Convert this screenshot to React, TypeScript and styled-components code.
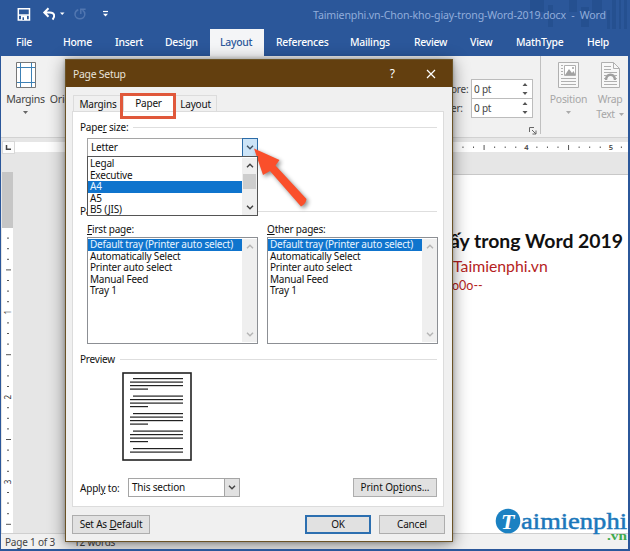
import React from "react";
import styled, { createGlobalStyle } from "styled-components";

const GlobalStyle = createGlobalStyle`
  *, *::before, *::after { box-sizing: border-box; }
  html, body { margin: 0; padding: 0; }
  body { overflow: hidden; font-family: "Noto Sans", "Open Sans", sans-serif; font-size: 10px; }
  u { text-underline-offset: 1px; text-decoration-thickness: 1px; }
`;

const Label = styled.span<{ $size?: number; $spacing?: number; $weight?: number }>`
  display: inline-block;
  white-space: pre;
  font-size: ${(p) => p.$size ?? 10}px;
  font-weight: ${(p) => p.$weight ?? 400};
  letter-spacing: ${(p) => p.$spacing ?? -0.2}px;
`;

/* ---------- Word window ---------- */
const Window = styled.div`
  position: relative;
  width: 630px;
  height: 551px;
  overflow: hidden;
  display: flex;
  flex-direction: column;
  background: #e6e6e6;
  border: solid #2b579a;
  border-width: 0 2px 2px 1px;
`;
const TitleBar = styled.header`
  position: relative;
  height: 29px;
  flex: none;
  display: flex;
  align-items: center;
  background: #2b579a;
  color: #91addb;
`;
const QuickAccess = styled.div`
  width: 312px;
  height: 29px;
  flex: none;
  svg { display: block; }
`;
const TitlePattern = styled.svg`
  position: absolute;
  right: 0;
  top: 0;
`;
const DocumentName = styled.div`
  position: relative;
  line-height: 28px;
`;
const RibbonTabs = styled.nav`
  height: 27px;
  flex: none;
  display: grid;
  grid-template-columns: 47px 52px 50px 55px 56px 74px 64px 56px 46px 71px 30px;
  padding-left: 15px;
  background: #2b579a;
`;
const RibbonTab = styled.div<{ $active?: boolean }>`
  line-height: 27px;
  white-space: nowrap;
  ${(p) =>
    p.$active
      ? "margin-left: -10px; padding-left: 10px; width: 54px; background: #f4f5f7; color: #2b579a;"
      : "color: #fff;"}
`;
const Ribbon = styled.section`
  height: 82px;
  flex: none;
  display: flex;
  background: #f1f1f1;
  border-bottom: 1px solid #d2d2d2;
  color: #444;
`;
const RibbonButton = styled.div<{ $width: number; $muted?: boolean }>`
  width: ${(p) => p.$width}px;
  flex: none;
  padding-top: 6px;
  display: flex;
  flex-direction: column;
  align-items: center;
  color: ${(p) => (p.$muted ? "#a6a6a6" : "#444")};
  svg { display: block; flex: none; }
`;
const ButtonText = styled.div`
  display: flex;
  align-items: center;
  gap: 4px;
  height: 14px;
  line-height: 14px;
  margin-top: 1px;
`;
const ButtonIcon = styled.div`
  height: 29px;
`;
const CaretLine = styled.div`
  height: 10px;
  padding-top: 5px;
`;
const Push = styled.div`
  flex: 1;
`;
const SpacingGroup = styled.div`
  width: 90px;
  flex: none;
  padding-top: 23px;
  border-right: 1px solid #c0c0c0;
  margin-bottom: 3px;
`;
const SpacingRow = styled.div`
  display: grid;
  grid-template-columns: 20px 62px;
  height: 20px;
  align-items: center;
  & + & { margin-top: -1px; }
`;
const Spinner = styled.div`
  height: 20px;
  display: flex;
  justify-content: space-between;
  align-items: center;
  padding: 0 4px 0 2px;
  background: #fff;
  border: 1px solid #bcbcbc;
  line-height: 18px;
`;
const Launcher = styled.svg`
  display: block;
  margin: 9px 0 0 78px;
`;

const Workspace = styled.main`
  flex: 1;
  display: flex;
  min-height: 0;
`;
const VerticalRuler = styled.aside`
  width: 14px;
  flex: none;
  display: flex;
  flex-direction: column;
  padding-top: 3px;
`;
const TabSelector = styled.div`
  width: 13px;
  height: 13px;
  margin-left: 1px;
  background: #fdfdfd;
  border: 1px solid #d8d8d8;
  svg { display: block; }
`;
const RulerScale = styled.svg`
  display: block;
  margin: 18px 0 0 1px;
`;
const DocumentArea = styled.div`
  flex: 1;
  display: flex;
  flex-direction: column;
`;
const HorizontalRuler = styled.svg`
  display: block;
  flex: none;
  margin-top: 4px;
`;
const Page = styled.article`
  margin: 22px 0 0 51px;
  flex: 1;
  background: #fff;
  border-top: 1px solid #c8c8c8;
  padding: 54px 0 0 384px;
  font-family: Lato, sans-serif;
  white-space: nowrap;
`;
const Heading = styled.h1`
  margin: 0;
  font-size: 19.4px;
  line-height: 24px;
  font-weight: 700;
  color: #111;
`;
const RedLine = styled.p<{ $size: number; $height: number; $indent: number }>`
  margin: 0;
  padding-left: ${(p) => p.$indent}px;
  font-size: ${(p) => p.$size}px;
  line-height: ${(p) => p.$height}px;
  color: #b51e22;
`;
const StatusBar = styled.footer`
  height: 16px;
  flex: none;
  display: flex;
  gap: 19px;
  padding-left: 4px;
  line-height: 17px;
  background: #f1f1f1;
  border-top: 1px solid #cfcfcf;
  color: #444;
`;
const Watermark = styled.svg`
  position: absolute;
  left: 494px;
  top: 505px;
`;

/* ---------- Page Setup dialog ---------- */
const Dialog = styled.div`
  position: absolute;
  left: 64px;
  top: 59px;
  width: 388px;
  height: 483px;
  display: flex;
  flex-direction: column;
  background: #f0f0f0;
  border: 1px solid #6b5326;
  box-shadow: 0 3px 16px rgba(0, 0, 0, 0.45), 0 0 4px rgba(0, 0, 0, 0.25);
  color: #111;
`;
const DialogTitle = styled.div`
  height: 27px;
  flex: none;
  display: flex;
  align-items: center;
  padding-left: 7px;
  background: #633f0f;
  color: #e9e3da;
  svg { display: block; margin-left: 20px; }
`;
const HelpMark = styled.span`
  margin-left: auto;
  font-size: 12px;
  color: #fff;
`;
const TabStrip = styled.div`
  height: 24px;
  flex: none;
  display: flex;
  align-items: flex-end;
  padding-left: 7px;
`;
const DialogTab = styled.div<{ $width: number; $active?: boolean }>`
  width: ${(p) => p.$width}px;
  height: ${(p) => (p.$active ? 18 : 16)}px;
  line-height: ${(p) => (p.$active ? 18 : 17)}px;
  text-align: center;
  background: ${(p) => (p.$active ? "#fff" : "#f0f0f0")};
  border: 1px solid #dcdcdc;
  border-bottom: 0;
`;
const Panel = styled.div`
  height: 396px;
  flex: none;
  margin: 0 8px 0 6px;
  padding: 0 6px 0 7px;
  background: #fff;
  border: 1px solid #dcdcdc;
`;
const GroupHeader = styled.div<{ $top: number }>`
  display: flex;
  align-items: center;
  gap: 5px;
  height: 14px;
  line-height: 14px;
  margin-top: ${(p) => p.$top}px;
  &::after { content: ""; flex: 1; height: 1px; background: #dedede; }
`;
const Combo = styled.div<{ $width: number }>`
  position: relative;
  width: ${(p) => p.$width}px;
  height: 19px;
  display: flex;
  justify-content: space-between;
  padding-left: 3px;
  line-height: 17px;
  background: #fff;
  border: 1px solid #a5a5a5;
`;
const ComboButton = styled.div<{ $open?: boolean }>`
  width: 16px;
  height: 19px;
  margin: -1px;
  display: grid;
  place-items: center;
  background: ${(p) => (p.$open ? "#cce4f7" : "#e1e1e1")};
  border: 1px solid ${(p) => (p.$open ? "#2c6ca8" : "#a5a5a5")};
`;
const PaperCombo = styled.div`
  margin: 4px 0 0 7px;
`;
const List = styled.div<{ $height: number; $popup?: boolean }>`
  height: ${(p) => p.$height}px;
  display: flex;
  background: #fff;
  border: 1px solid #8c8f94;
  padding: 1px 0;
  ${(p) => (p.$popup ? "position: absolute; z-index: 1; left: -1px; top: 17px; width: 171px; padding: 1px 0 0; border-color: #555;" : "")}
`;
const Options = styled.div`
  flex: 1;
  min-width: 0;
  overflow: hidden;
`;
const Option = styled.div<{ $selected?: boolean }>`
  height: 11.5px;
  line-height: 11.5px;
  padding-left: 2px;
  white-space: nowrap;
  ${(p) => (p.$selected ? "background: #0f74cd; color: #e9f4ff;" : "")}
`;
const ScrollTrack = styled.div`
  width: 15px;
  flex: none;
  display: flex;
  flex-direction: column;
  align-items: center;
  padding: 5px 0 5px;
  background: #efefef;
  svg { display: block; }
`;
const ScrollThumb = styled.div`
  width: 13px;
  height: 15px;
  margin-top: 6px;
  background: #cdcdcd;
`;
const TrayColumns = styled.div`
  display: grid;
  grid-template-columns: 171px 171px;
  column-gap: 9px;
  margin: 3px 0 0 7px;
`;
const TrayLabel = styled.div`
  height: 16px;
  line-height: 16px;
`;
const PreviewPage = styled.svg`
  display: block;
  margin: 6px 0 0 42px;
`;
const ApplyRow = styled.div`
  display: flex;
  align-items: center;
  margin-top: 16px;
`;
const ApplyLabel = styled.div`
  width: 48px;
`;
const PushButton = styled.div<{ $width: number; $primary?: boolean }>`
  width: ${(p) => p.$width}px;
  height: 19px;
  line-height: ${(p) => (p.$primary ? 15 : 17)}px;
  text-align: center;
  background: #e1e1e1;
  border: ${(p) => (p.$primary ? "2px solid #2c6fb0" : "1px solid #adadad")};
`;
const Actions = styled.div`
  display: flex;
  padding: 8px 7px 0 6px;
`;
const ConfirmPair = styled.div`
  display: flex;
  gap: 8px;
`;
const TabCallout = styled.div`
  position: absolute;
  left: 119px;
  top: 93px;
  width: 56px;
  height: 26px;
  border: 3px solid #e0583b;
`;
const Pointer = styled.svg`
  position: absolute;
  left: 244px;
  top: 140px;
  filter: drop-shadow(2px 2px 2px rgba(0, 0, 0, 0.45));
`;

const Chevron = ({ up, color = "#444" }: { up?: boolean; color?: string }) => (
  <svg width="8" height="5" viewBox="0 0 8 5" fill="none" stroke={color} strokeWidth="1.4">
    <path d={up ? "M1 4.3 4 1.2l3 3.1" : "M1 .7l3 3.1L7 .7"} />
  </svg>
);
const Caret = ({ color = "#666" }: { color?: string }) => (
  <svg width="5" height="3" viewBox="0 0 5 3"><path d="M0 0h5L2.5 3z" fill={color} /></svg>
);
const SpinArrows = () => (
  <svg width="6" height="12" viewBox="0 0 6 12" fill="#555"><path d="M.5 3 3 0l2.5 3zM.5 9h5L3 12z" /></svg>
);

const QuickAccessIcons = () => (
  <svg width="120" height="29" viewBox="1 0 120 29" fill="none">
    <path d="M18.300 8.800h11.200v11.200H18.300z" stroke="#fff" strokeWidth="1.500" />
    <path d="M19 14.300h10v1.500H19z" fill="#fff" />
    <path d="M21 15.500h6V20h-6z" fill="#fff" />
    <path d="M22.500 17.300h1.500V20h-1.500z" fill="#2b579a" />
    <path d="M48.500 8.300l-4.200 4.200 4.200 4.200M44.800 12.500h5c4.800 0 5.600 3.600 2.800 7.200" stroke="#fff" strokeWidth="2" />
    <path d="M60 12.500h4.500L62.200 15z" fill="#fff" />
    <path d="M78.300 9.700c-2.200.8-3.300 2.600-3.300 4.500 0 6 9.800 6 9.800 0 0-1.600-.8-3-2.300-4M80.800 14V9.300h4.800" stroke="#5176b0" strokeWidth="1.500" />
    <path d="M103 11.500h5" stroke="#fff" strokeWidth="1.200" />
    <path d="M103 13.800h5l-2.500 2.700z" fill="#fff" />
  </svg>
);

const MarginsIcon = () => (
  <svg width="20" height="26" viewBox="0 0 20 26" fill="none">
    <path d="M.5 .5h19v25H.5z" fill="#fff" stroke="#777" />
    <path d="M4.500 1v24M15.500 1v24M1 5.500h18M1 20.500h18" stroke="#3c80b5" />
  </svg>
);
const PositionIcon = () => (
  <svg width="21" height="26" viewBox="0 0 21 26" fill="none" stroke="#b0b0b0">
    <path d="M.5 .5h20v25H.5z" fill="#f8f8f8" />
    <path d="M3 3.500h2M3 6.500h2M3 9.500h2M3 12.500h2M3 16.500h15M3 19.500h15M3 22.500h15" />
    <path d="M6.500 3.500h11v10h-11z" fill="#fff" />
    <path d="M7 13l4-6 3 4 1.500-2 2 4z" fill="#a2a2a2" stroke="none" />
    <circle cx="15" cy="6" r="1" fill="#a2a2a2" stroke="none" />
  </svg>
);
const WrapIcon = () => (
  <svg width="19" height="26" viewBox="0 0 19 26" fill="none" stroke="#b0b0b0">
    <path d="M.5 .5h12l6 6v19H.5z" fill="#f8f8f8" />
    <path d="M12.500 .5v6h6M3 4.500h7M3 7.500h7M3 10.500h13M3 13.500h2M14 13.500h2M3 16.500h1M15 16.500h1M3 19.500h13M3 22.500h13" />
    <path d="M5 18c.5-7 8.500-7 9 0" strokeWidth="2.400" stroke="#a0a0a0" />
  </svg>
);

const VerticalScale = () => (
  <RulerScale width="11" height="361" viewBox="0 0 11 361">
    <rect width="11" height="361" fill="#fff" />
    <rect width="11" height="56" fill="#c6c6c6" />
    {Array.from({ length: 28 }, (_, i) => {
      const n = i + 1;
      const y = 55.5 + n * 10.6;
      if (n % 8 === 0) {
        return (
          <text key={n} x="6" y={y + 2.8} fontSize="8" fill="#333" textAnchor="middle" transform={`rotate(-90 6 ${y})`}>
            {n / 8}
          </text>
        );
      }
      const mid = n % 4 === 0;
      return <rect key={n} x={mid ? 4 : 5} y={y - 0.5} width={mid ? 5 : 2} height="1" fill="#555" />;
    })}
  </RulerScale>
);

const HorizontalScale = () => (
  <HorizontalRuler width="613" height="10" viewBox="15 0 613 10">
    <rect x="15" width="613" height="10" fill="#fff" />
    {Array.from({ length: 17 }, (_, i) => {
      const x = 452.4 + i * 10.56;
      if (i === 7 || i === 15) {
        return <text key={i} x={x} y="8" fontSize="7.5" fontWeight="600" fill="#444" textAnchor="middle">{i === 7 ? 4 : 5}</text>;
      }
      const mid = i === 3 || i === 11;
      return <rect key={i} x={x - 0.5} y={mid ? 3 : 4.5} width="1" height={mid ? 5 : 1.5} fill="#555" />;
    })}
  </HorizontalRuler>
);

const PagePreview = () => (
  <PreviewPage width="70" height="90" viewBox="0 0 70 90">
    <rect x="1" y="1" width="68" height="87" fill="#fff" stroke="#222" strokeWidth="1.600" />
    {[0, 1, 2, 3, 4].map((block) =>
      [0, 1, 2, 3].filter((line) => block < 4 || line < 2).map((line) => (
        <rect
          key={`${block}-${line}`}
          x={line === 0 ? 11 : 8}
          y={6 + block * 17.5 + line * 3.5}
          width={line === 0 ? 50 : line === 3 ? 18 : 53}
          height="1.2"
          fill="#222"
        />
      ))
    )}
  </PreviewPage>
);

const trays = ["Default tray (Printer auto select)", "Automatically Select", "Printer auto select", "Manual Feed", "Tray 1"];
const paperSizes = ["Legal", "Executive", "A4", "A5", "B5 (JIS)"];
const ribbonTabs = ["File", "Home", "Insert", "Design", "Layout", "References", "Mailings", "Review", "View", "MathType", "Help"];

const TrayList = () => (
  <List $height={107}>
    <Options>
      {trays.map((name, i) => (
        <Option key={name} $selected={i === 0}><Label $spacing={-0.2}>{name}</Label></Option>
      ))}
    </Options>
    <ScrollTrack>
      <Chevron up color="#b5b5b5" /><Push /><Chevron color="#b5b5b5" />
    </ScrollTrack>
  </List>
);

export default function App() {
  return (
    <>
      <GlobalStyle />
      <Window>
        <TitleBar>
          <TitlePattern width="108" height="29" viewBox="0 0 108 29" fill="#214b87" opacity=".5">
            <path d="M10 0h14v12H10zM28 5h5v22h-5zM49 0h8v12h-8zM61 7h8v20h-8zM72 0h10v15H72zM87 10h3v19h-3zM92 0h4v29h-4zM99 0h2v29h-2zM104 0h3v29h-3z" />
          </TitlePattern>
          <QuickAccess><QuickAccessIcons /></QuickAccess>
          <DocumentName><Label $size={10.6} $spacing={-0.15}>{"Taimienphi.vn-Chon-kho-giay-trong-Word-2019.docx  -  Word"}</Label></DocumentName>
        </TitleBar>
        <RibbonTabs>
          {ribbonTabs.map((name) => (
            <RibbonTab key={name} $active={name === "Layout"}>
              <Label $size={10.4} $spacing={-0.25} $weight={500}>{name}</Label>
            </RibbonTab>
          ))}
        </RibbonTabs>
        <Ribbon>
          <RibbonButton $width={49}>
            <ButtonIcon><MarginsIcon /></ButtonIcon>
            <ButtonText><Label $size={10.6} $spacing={-0.3}>Margins</Label></ButtonText>
            <CaretLine><Caret /></CaretLine>
          </RibbonButton>
          <RibbonButton $width={20}>
            <ButtonIcon />
            <ButtonText><Label $size={10.6}>Orie</Label></ButtonText>
          </RibbonButton>
          <Push />
          <SpacingGroup>
            <SpacingRow><Label>ore:</Label><Spinner><Label>0 pt</Label><SpinArrows /></Spinner></SpacingRow>
            <SpacingRow><Label>er:</Label><Spinner><Label>0 pt</Label><SpinArrows /></Spinner></SpacingRow>
            <Launcher width="8" height="8" viewBox="0 0 8 8" fill="none" stroke="#666"><path d="M.5 5V.5H5M3 3l4 4M7 3.500V7H3.500" /></Launcher>
          </SpacingGroup>
          <RibbonButton $width={55} $muted>
            <ButtonIcon><PositionIcon /></ButtonIcon>
            <ButtonText><Label $size={10.4} $spacing={-0.25}>Position</Label></ButtonText>
            <CaretLine><Caret color="#aaa" /></CaretLine>
          </RibbonButton>
          <RibbonButton $width={28} $muted>
            <ButtonIcon><WrapIcon /></ButtonIcon>
            <ButtonText><Label $size={10.4} $spacing={-0.3}>Wrap</Label></ButtonText>
            <ButtonText><Label $size={10.4} $spacing={-0.4}>Text</Label><Caret color="#aaa" /></ButtonText>
          </RibbonButton>
          <RibbonButton $width={4} />
        </Ribbon>
        <Workspace>
          <VerticalRuler>
            <TabSelector>
              <svg width="11" height="11" viewBox="0 0 11 11" fill="none" stroke="#444" strokeWidth="1.500"><path d="M3.500 3v4.200H8" /></svg>
            </TabSelector>
            <VerticalScale />
          </VerticalRuler>
          <DocumentArea>
            <HorizontalScale />
            <Page>
              <Heading>ấy trong Word 2019</Heading>
              <RedLine $size={15.8} $height={25} $indent={3}>Taimienphi.vn</RedLine>
              <RedLine $size={12.5} $height={15} $indent={2}>o0o--</RedLine>
            </Page>
          </DocumentArea>
        </Workspace>
        <StatusBar><Label>Page 1 of 3</Label><Label>12 words</Label></StatusBar>

        <Watermark width="136" height="44" viewBox="495 505 136 44">
          <circle cx="508" cy="521" r="12.300" fill="#1b81c2" />
          <text x="501" y="528.500" fontFamily="Liberation Serif" fontStyle="italic" fontWeight="700" fontSize="22" fill="#fff">T</text>
          <text x="521" y="529" fontFamily="Liberation Serif" fontSize="23" fill="#1b78bb" stroke="#1b78bb" strokeWidth=".5" textLength="106" lengthAdjust="spacingAndGlyphs">aimienphi</text>
          <text x="607" y="540" fontFamily="Liberation Serif" fontWeight="700" fontSize="13.500" fill="#3daa4c" textLength="20" lengthAdjust="spacingAndGlyphs">.vn</text>
        </Watermark>

        <Dialog>
          <DialogTitle>
            <Label $size={10.4} $spacing={-0.25}>Page Setup</Label>
            <HelpMark>?</HelpMark>
            <svg width="37" height="10" viewBox="0 0 37 10" fill="none" stroke="#fff" strokeWidth="1.200"><path d="M12 1l8 8M20 1l-8 8" /></svg>
          </DialogTitle>
          <TabStrip>
            <DialogTab $width={50}><Label>Margins</Label></DialogTab>
            <DialogTab $width={51} $active><Label>Paper</Label></DialogTab>
            <DialogTab $width={43}><Label>Layout</Label></DialogTab>
          </TabStrip>
          <Panel>
            <GroupHeader $top={8}><Label>Pape<u>r</u> size:</Label></GroupHeader>
            <PaperCombo>
              <Combo $width={171}>
                <Label>Letter</Label>
                <ComboButton $open><Chevron color="#456" /></ComboButton>
                <List $height={60} $popup>
                  <Options>
                    {paperSizes.map((name) => (
                      <Option key={name} $selected={name === "A4"}><Label>{name}</Label></Option>
                    ))}
                  </Options>
                  <ScrollTrack><Chevron up /><ScrollThumb /><Push /><Chevron /></ScrollTrack>
                </List>
              </Combo>
            </PaperCombo>
            <GroupHeader $top={47}><Label>Pa</Label></GroupHeader>
            <TrayColumns>
              <div><TrayLabel><Label><u>F</u>irst page:</Label></TrayLabel><TrayList /></div>
              <div><TrayLabel><Label><u>O</u>ther pages:</Label></TrayLabel><TrayList /></div>
            </TrayColumns>
            <GroupHeader $top={8}><Label>Preview</Label></GroupHeader>
            <PagePreview />
            <ApplyRow>
              <ApplyLabel><Label>Appl<u>y</u> to:</Label></ApplyLabel>
              <Combo $width={112}><Label>This section</Label><ComboButton><Chevron /></ComboButton></Combo>
              <Push />
              <PushButton $width={84}><Label $spacing={-0.1}>Print Op<u>t</u>ions...</Label></PushButton>
            </ApplyRow>
          </Panel>
          <Actions>
            <PushButton $width={78}><Label>Set As <u>D</u>efault</Label></PushButton>
            <Push />
            <ConfirmPair>
              <PushButton $width={66} $primary><Label>OK</Label></PushButton>
              <PushButton $width={66}><Label>Cancel</Label></PushButton>
            </ConfirmPair>
          </Actions>
        </Dialog>
        <TabCallout />
        <Pointer width="74" height="76" viewBox="245 140 74 76">
          <path d="M254 148.500 279.500 160l-4 5.500L306.500 199q-.5 5-5.500 7.500L270 171l-7 4z" fill="#fa4f2b" />
        </Pointer>
      </Window>
    </>
  );
}
